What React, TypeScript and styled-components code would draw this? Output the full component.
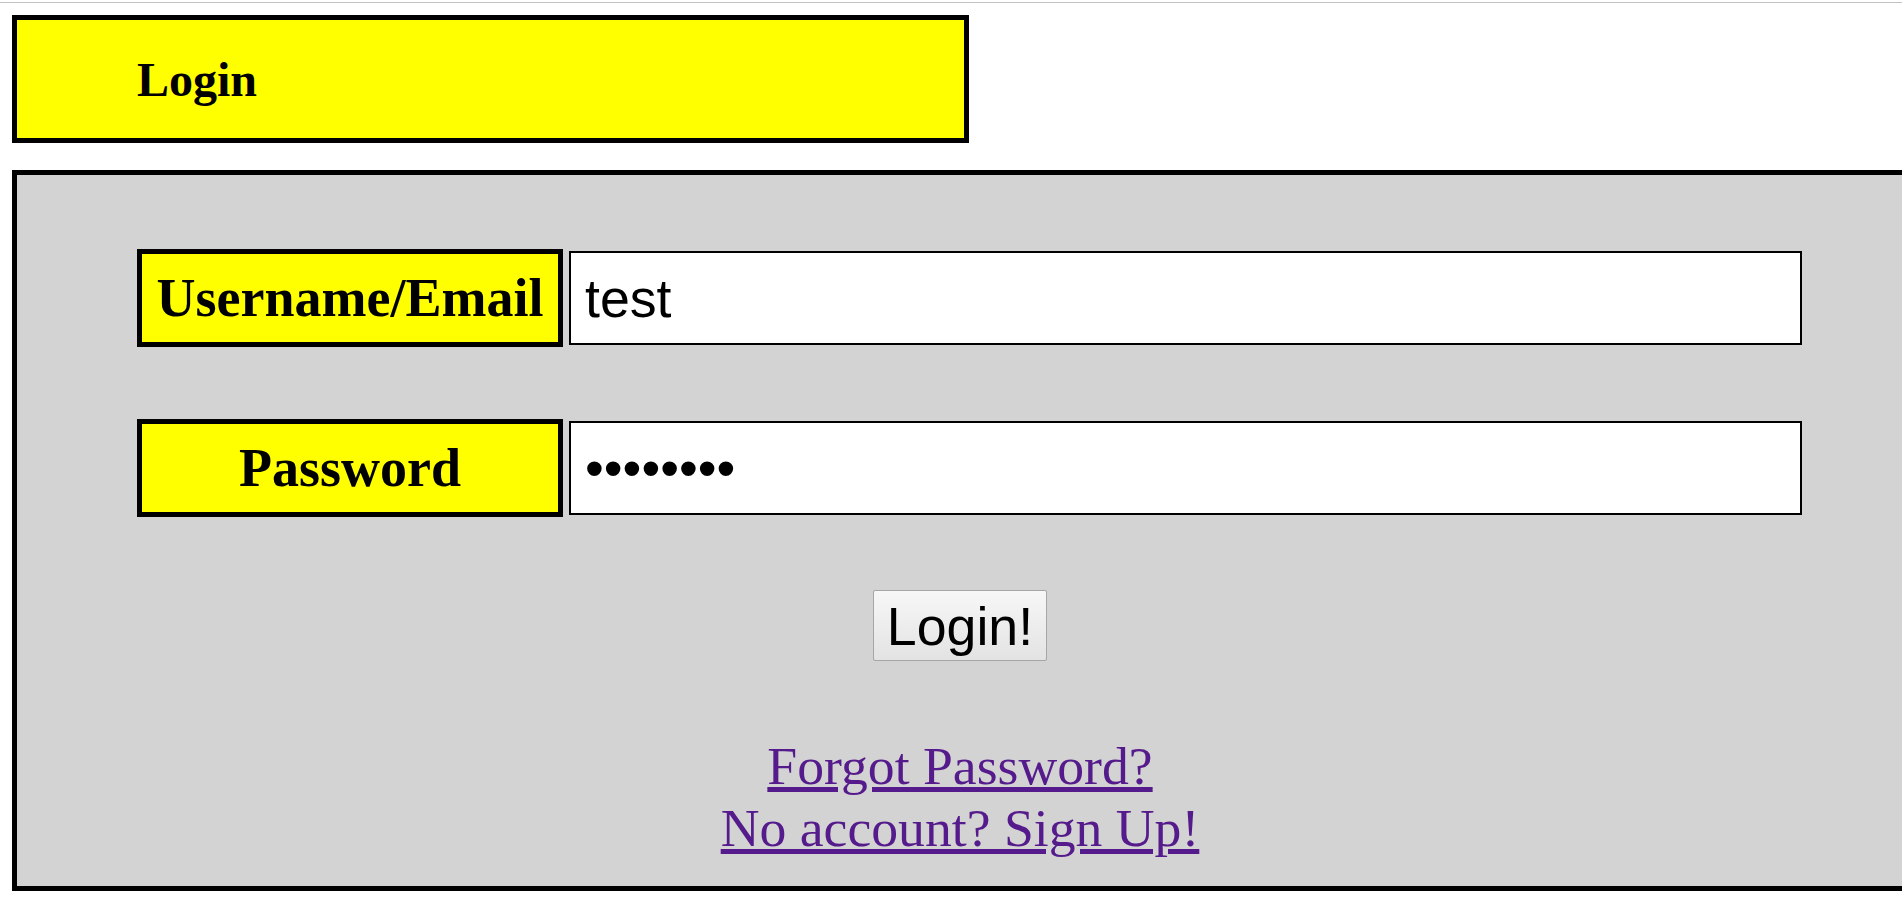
import * as React from 'react';
import styled, { createGlobalStyle } from 'styled-components';

const serif = '"Liberation Serif", "Times New Roman", serif';
const sans = '"Liberation Sans", Arial, sans-serif';

const GlobalStyle = createGlobalStyle`
    html, body {
        margin: 0;
        padding: 0;
        background: #fff;
        overflow: hidden;
    }
    body {
        font-family: ${serif};
        color: #000;
    }
`

const Page = styled.div`
    padding-top: 2px;
`

const TopRule = styled.div`
    height: 1px;
    background: #c2c2c2;
`

const Header = styled.header`
    box-sizing: border-box;
    margin: 12px 0 0 12px;
    width: 957px;
    height: 128px;
    border: 5px solid #000;
    background: #ffff00;
    padding-left: 120px;
    display: flex;
    align-items: center;
    font-family: ${serif};
    font-weight: bold;
    font-size: 48px;
`

const Panel = styled.main`
    box-sizing: border-box;
    margin: 27px 0 0 12px;
    width: 1896px;
    height: 721px;
    border: 5px solid #000;
    background: #d3d3d3;
    padding-top: 74px;
    display: flex;
    flex-direction: column;
`

const Form = styled.div`
    display: grid;
    grid-template-columns: 426px 1fr;
    column-gap: 6px;
    row-gap: 72px;
    align-items: center;
    margin: 0 101px 0 120px;
`

const Label = styled.label`
    box-sizing: border-box;
    height: 98px;
    border: 5px solid #000;
    background: #ffff00;
    display: flex;
    align-items: center;
    justify-content: center;
    font-family: ${serif};
    font-weight: bold;
    font-size: 54px;
    white-space: nowrap;
`

const Field = styled.input`
    box-sizing: border-box;
    width: 100%;
    height: 94px;
    border: 2px solid #000;
    background: #fff;
    padding: 0 14px;
    font-family: ${sans};
    font-size: 53.7px;
    color: #000;
    outline: none;
`

const Submit = styled.button`
    box-sizing: border-box;
    align-self: center;
    margin-top: 73px;
    height: 71px;
    padding: 0 13px;
    border: 1px solid #a6a6a6;
    border-radius: 2px;
    background: linear-gradient(#f7f7f7, #e3e3e3);
    font-family: ${sans};
    font-size: 53.7px;
    color: #000;
    cursor: pointer;
`

const Links = styled.div`
    margin-top: 74px;
    text-align: center;
    font-family: ${serif};
    font-size: 53.7px;

    a {
        color: #551a8b;
        text-decoration: underline;
    }
`

export default function App() {
    return (
        <Page>
            <GlobalStyle />
            <TopRule />
            <Header>Login</Header>
            <Panel>
                <Form>
                    <Label htmlFor="user">Username/Email</Label>
                    <Field id="user" type="text" defaultValue="test" />
                    <Label htmlFor="pass">Password</Label>
                    <Field id="pass" type="password" defaultValue="12345678" />
                </Form>
                <Submit type="button">Login!</Submit>
                <Links>
                    <a href="#forgot">Forgot Password?</a>
                    <br />
                    <a href="#signup">No account? Sign Up!</a>
                </Links>
            </Panel>
        </Page>
    );
}
